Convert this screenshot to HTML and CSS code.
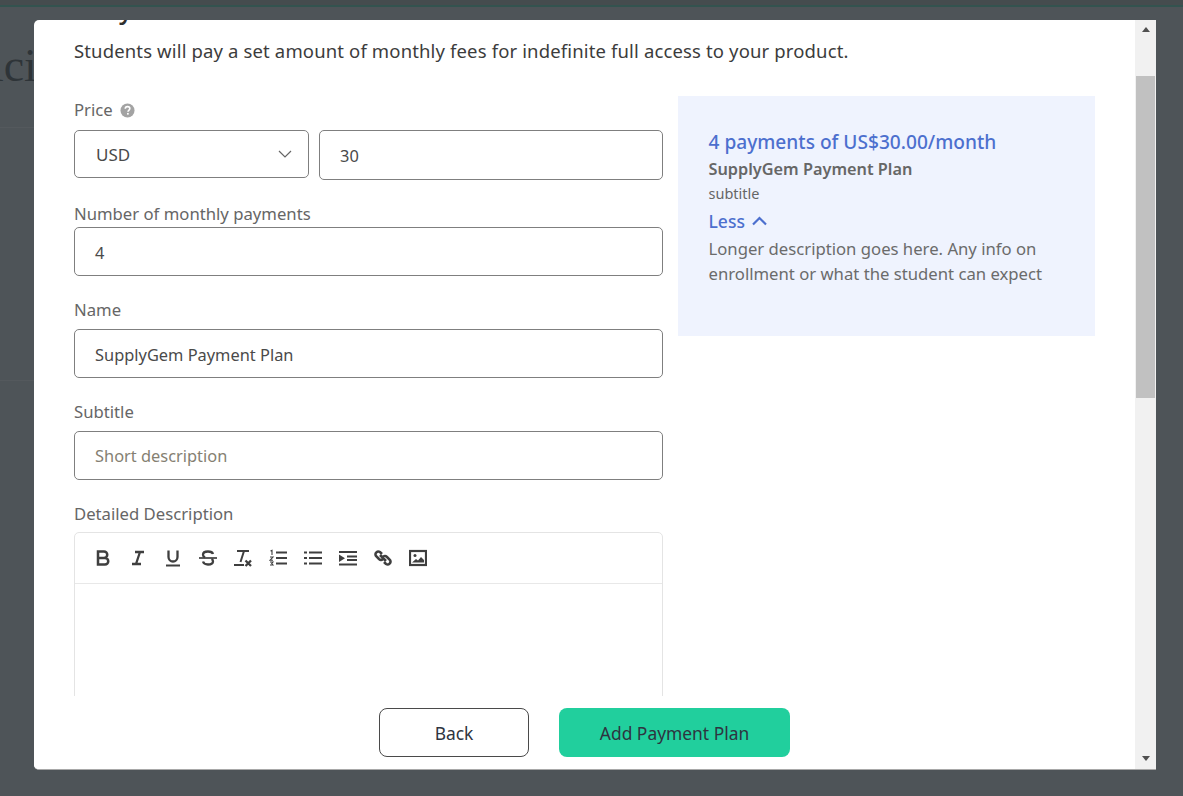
FILE: index.html
```html
<!DOCTYPE html>
<html lang="en">
<head>
<meta charset="utf-8">
<title>Add Payment Plan</title>
<link rel="stylesheet" href="styles.css">
</head>
<body>
<div class="page-strip"></div>
<div class="page-text">Pricing</div>
<div class="page-rule page-rule-a"></div>
<div class="page-rule page-rule-b"></div>
<section class="modal">
  <div class="modal-main">
    <div class="modal-scroll">
      <div class="scroll-inner">
        <h2 class="plan-title">Fully Paid Plan</h2>
        <p class="plan-desc">Students will pay a set amount of monthly fees for indefinite full access to your product.</p>
        <div class="columns">
          <form class="form-col">
            <div class="label label-price">Price
              <svg class="help" viewBox="0 0 16 16" width="15" height="15"><circle cx="8" cy="8" r="7.5" fill="#a3a3a3"/><path d="M5.6 6.2c0-1.5 1-2.3 2.5-2.3 1.4 0 2.4.8 2.4 2 0 1.900-2 1.900-2 3.300" fill="none" stroke="#fff" stroke-width="1.700"/><rect x="7.500" y="10.600" width="1.800" height="1.800" fill="#fff"/></svg>
            </div>
            <div class="price-row">
              <div class="field select">USD
                <svg class="chev" viewBox="0 0 14 8" width="14" height="8"><path d="M1 1l6 6 6-6" fill="none" stroke="#666" stroke-width="1.200"/></svg>
              </div>
              <div class="field amount">30</div>
            </div>
            <div class="label label-count">Number of monthly payments</div>
            <div class="field field-count">4</div>
            <div class="label label-next">Name</div>
            <div class="field field-name">SupplyGem Payment Plan</div>
            <div class="label label-next">Subtitle</div>
            <div class="field placeholder">Short description</div>
            <div class="label label-next label-editor">Detailed Description</div>
            <div class="editor">
              <div class="toolbar">
                <svg class="tool" viewBox="0 0 18 18"><path d="M4 2.500h6a3.200 3.200 0 0 1 0 6.500H4zM4 9h7a3.200 3.200 0 0 1 0 6.500H4z" fill="none" stroke="#3f3f3f" stroke-width="2.500"/></svg>
                <svg class="tool" viewBox="0 0 18 18"><path d="M6 3h9M3 15h9M11 3L7 15" fill="none" stroke="#3f3f3f" stroke-width="2.300"/></svg>
                <svg class="tool" viewBox="0 0 18 18"><path d="M4.500 1.500V8a4.500 4.500 0 0 0 9 0V1.500" fill="none" stroke="#3f3f3f" stroke-width="2.300"/><path d="M2 16.500h14" stroke="#3f3f3f" stroke-width="2"/></svg>
                <svg class="tool" viewBox="0 0 18 18"><path d="M14 5c-.5-1.500-2.500-2.500-5-2.500-3 0-5 1.300-5 3.200 0 1 .5 2 2 2.800M4 12.500c.5 1.700 2.500 3 5 3 3 0 5-1.300 5-3.300 0-1-.5-1.700-1.500-2.200" fill="none" stroke="#3f3f3f" stroke-width="2.300"/><path d="M0 9h18" stroke="#3f3f3f" stroke-width="1.700"/></svg>
                <svg class="tool" viewBox="0 0 18 18"><path d="M3 2h12M10 2L6.500 13M0 16h10" fill="none" stroke="#3f3f3f" stroke-width="2"/><path d="M11.500 11.500l5.500 5.500M17 11.500l-5.500 5.500" stroke="#3f3f3f" stroke-width="2.300"/></svg>
                <svg class="tool" viewBox="0 0 18 18"><path d="M7 3.500h11M7 9h11M7 14.500h11" stroke="#3f3f3f" stroke-width="2.200"/><path d="M1.500 2l1.500-.7V6M1 8h3L1 11.300h3M1 13h3l-1.300 1.500L4 16H1" fill="none" stroke="#3f3f3f" stroke-width="1.100"/></svg>
                <svg class="tool" viewBox="0 0 18 18"><path d="M5 3.500h13M5 9h13M5 14.500h13" stroke="#3f3f3f" stroke-width="2.200"/><path d="M0 3.500h3M0 9h3M0 14.500h3" stroke="#3f3f3f" stroke-width="2.200"/></svg>
                <svg class="tool" viewBox="0 0 18 18"><path d="M0 3h18M8 7.500h10M8 11h10M0 15.500h18" stroke="#3f3f3f" stroke-width="2.200"/><path d="M0 5.500v7.500l6-3.700z" fill="#3f3f3f"/></svg>
                <svg class="tool" viewBox="0 0 18 18"><path d="M8 5L6 3a2.900 2.900 0 0 0-4 4l3 3a2.900 2.900 0 0 0 4 0M10 13l2 2a2.900 2.900 0 0 0 4-4l-3-3a2.900 2.900 0 0 0-4 0M6 6l6 6" fill="none" stroke="#3f3f3f" stroke-width="2.500"/></svg>
                <svg class="tool" viewBox="0 0 18 18"><rect x="1" y="2" width="16" height="14" fill="none" stroke="#3f3f3f" stroke-width="2.200"/><path d="M3 13.500l4-3.500 2 1.500 3-3.500 3 3v2.500z" fill="#3f3f3f"/><circle cx="6" cy="6.500" r="1.500" fill="#3f3f3f"/></svg>
              </div>
              <div class="editor-body"></div>
            </div>
          </form>
          <aside class="preview">
            <div class="preview-title">4 payments of US$30.00/month</div>
            <div class="preview-name">SupplyGem Payment Plan</div>
            <div class="preview-sub">subtitle</div>
            <div class="preview-less">Less
              <svg class="less-icon" viewBox="0 0 16 10" width="17" height="10"><path d="M1.500 8.500L8 2l6.500 6.500" fill="none" stroke="#4c6fce" stroke-width="2.200"/></svg>
            </div>
            <div class="preview-long">Longer description goes here. Any info on enrollment or what the student can expect</div>
          </aside>
        </div>
      </div>
    </div>
    <div class="modal-footer">
      <button class="btn btn-back" type="button">Back</button>
      <button class="btn btn-add" type="button">Add Payment Plan</button>
    </div>
  </div>
  <div class="scrollbar">
    <div class="arrow arrow-up"></div>
    <div class="thumb"></div>
    <div class="track-rest"></div>
    <div class="arrow arrow-down"></div>
  </div>
</section>
</body>
</html>
```
FILE: styles.css
```css
* { box-sizing: border-box; }
html, body { margin: 0; height: 100%; }
body {
  background: #4e5458;
  overflow: hidden;
  font-family: "Noto Sans", "Open Sans", sans-serif;
  color: #595959;
}
.page-strip {
  height: 7px;
  background: #454c4e;
  border-bottom: 2px solid #33534f;
}
.page-text {
  position: absolute;
  left: -50px;
  top: 36px;
  font: 46px/60px "Liberation Serif", serif;
  color: #2e3438;
}
.page-rule { position: absolute; left: 0; width: 34px; height: 1px; background: #54595d; }
.page-rule-a { top: 127px; }
.page-rule-b { top: 380px; }
.modal {
  position: absolute;
  left: 34px;
  top: 20px;
  width: 1122px;
  height: 750px;
  display: flex;
  background: #fff;
  border-radius: 5px 0 0 5px;
  border-bottom: 1px solid #a8a8a8;
  overflow: hidden;
}
.modal-main { flex: 1; min-width: 0; display: flex; flex-direction: column; }
.modal-scroll { flex: 1; min-height: 0; overflow: hidden; }
.scroll-inner { padding: 0 40px; margin-top: -26px; }
.plan-title {
  margin: 0;
  height: 28px;
  font-size: 26.500px;
  line-height: 28px;
  font-weight: 500;
  color: #2f2f2f;
}
.plan-desc {
  margin: 17px 0 0;
  font-size: 18.500px;
  line-height: 24px;
  letter-spacing: .14px;
  color: #3c3c3c;
}
.columns { display: flex; gap: 15px; margin-top: 33px; align-items: flex-start; }
.form-col { width: 589px; flex: none; margin-top: 2px; }
.label { font-size: 16.700px; line-height: 24px; color: #666; }
.label-price { display: flex; align-items: center; gap: 7px; margin-bottom: 8px; }
.label-count { margin-top: 22px; margin-bottom: 1px; }
.label-next { margin-top: 22px; margin-bottom: 7px; }
.label-editor { margin-bottom: 6px; }
.help { margin-top: 1px; }
.field {
  height: 49px;
  border: 1px solid #7f7f7f;
  border-radius: 5px;
  padding: 0 20px;
  display: flex;
  align-items: center;
  font-size: 16.400px;
  color: #4a4a4a;
  background: #fff;
}
.field-count { padding-top: 2px; }
.field-name { padding-top: 2px; }
.placeholder { color: #857f72; }
.price-row { display: flex; gap: 10px; align-items: flex-start; }
.select { width: 235px; height: 48px; justify-content: space-between; padding: 0 16px 0 21px; font-size: 17px; }
.amount { flex: 1; height: 50px; }
.editor { border: 1px solid #e4e4e4; border-radius: 5px 5px 0 0; }
.toolbar {
  height: 51px;
  border-bottom: 1px solid #e8e8e8;
  display: flex;
  align-items: center;
  gap: 17px;
  padding-left: 19px;
}
.tool { width: 18px; height: 18px; flex: none; }
.editor-body { height: 200px; }
.preview {
  width: 417px;
  height: 240px;
  flex: none;
  background: #eff3fe;
  padding: 33px 30px 0 30.500px;
}
.preview-title { font-size: 19.130px; line-height: 26px; font-weight: 500; color: #4c6fce; }
.preview-name { font-size: 16.300px; line-height: 28px; font-weight: 600; color: #666; }
.preview-sub { font-size: 14.500px; line-height: 21px; color: #666; }
.preview-less {
  display: flex; align-items: center; gap: 6px;
  margin-top: 2px;
  font-size: 17.500px; line-height: 30px; font-weight: 500; color: #4c6fce;
}
.preview-long { font-size: 16.700px; line-height: 25px; color: #6b6b6b; }
.modal-footer {
  flex: none;
  height: 73px;
  background: #fff;
  display: flex;
  justify-content: center;
  gap: 30px;
  padding-top: 12px;
}
.btn {
  height: 49px;
  border-radius: 8px;
  font: 400 17.400px "Noto Sans", sans-serif;
  color: #2e3440;
  cursor: pointer;
}
.btn-back { width: 150px; background: #fff; border: 1px solid #4a4a4a; }
.btn-add { width: 231px; background: #21cf9d; border: 0; }
.scrollbar {
  width: 21px;
  flex: none;
  background: #f1f1f1;
  display: flex;
  flex-direction: column;
}
.arrow { height: 21px; flex: none; display: flex; align-items: center; justify-content: center; }
.arrow::before { content: ""; border-left: 4.500px solid transparent; border-right: 4.500px solid transparent; }
.arrow-up { height: 56px; align-items: flex-start; padding-top: 7px; }
.arrow-up::before { border-bottom: 5px solid #505050; }
.arrow-down::before { border-top: 5px solid #505050; }
.thumb { height: 322px; margin: 0 1px; background: #c1c1c1; flex: none; }
.track-rest { flex: 1; }
```
